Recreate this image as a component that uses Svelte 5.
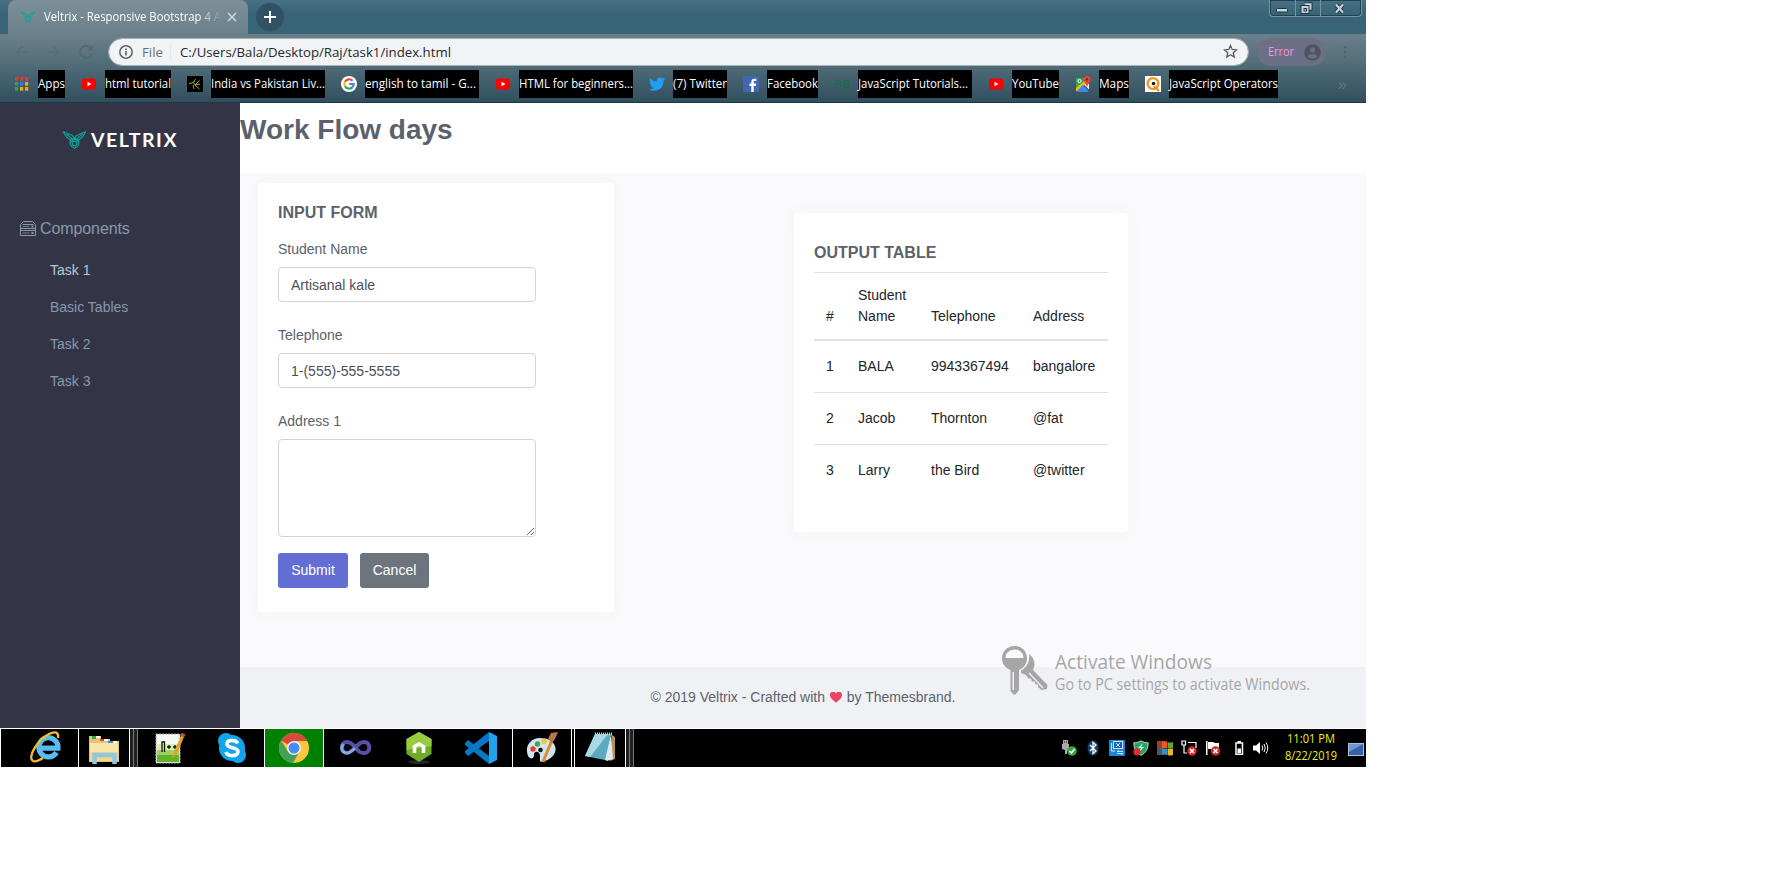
<script>
  const bookmarks = [
    { icon: 'apps', label: 'Apps', w: 27 },
    { icon: 'youtube', label: 'html tutorial', w: 66 },
    { icon: 'cricket', label: 'India vs Pakistan Liv...', w: 114 },
    { icon: 'google', label: 'english to tamil - G...', w: 114, tw: 111 },
    { icon: 'youtube', label: 'HTML for beginners...', w: 114 },
    { icon: 'twitter', label: '(7) Twitter', w: 54 },
    { icon: 'facebook', label: 'Facebook', w: 51 },
    { icon: 'geeks', label: 'JavaScript Tutorials...', w: 114, tw: 110 },
    { icon: 'youtube', label: 'YouTube', w: 47 },
    { icon: 'maps', label: 'Maps', w: 30 },
    { icon: 'query', label: 'JavaScript Operators', w: 109 }
  ];
  const links = ['Task 1', 'Basic Tables', 'Task 2', 'Task 3'];
  const rows = [
    ['1', 'BALA', '9943367494', 'bangalore'],
    ['2', 'Jacob', 'Thornton', '@fat'],
    ['3', 'Larry', 'the Bird', '@twitter']
  ];
  const tray = ['usb', 'bluetooth', 'intel', 'shield', 'windows', 'network', 'flag', 'battery', 'speaker'];
</script>

{#snippet fit(text, w, size, h, base)}
  <svg class="fit" width={w} height={h}><text x="0" y={base} font-size={size} textLength={w} lengthAdjust="spacingAndGlyphs">{text}</text></svg>
{/snippet}

{#snippet bird(w, h)}
  <svg width={w} height={h} viewBox="0 0 24 18" fill="none" stroke="#0fa398" stroke-width="1.200" stroke-linejoin="round">
    <path d="M.8.8 10 4.500 12 7.500l2-3L23.200.8C21 5 19.500 7.500 16 9L12 7.500 8 9C4.500 7.500 3 5 .8.8z" />
    <path d="M4 3l6 5.200M20 3l-6 5.200" />
    <path d="M8 9c-1 3 0 6.500 4 8.300 4-1.800 5-5.300 4-8.300M12 7.500 8 11M12 7.500l4 3.500" /><circle cx="12" cy="12.500" r="2.300" />
  </svg>
{/snippet}

{#snippet favicon(name)}
  <svg width="16" height="16" viewBox="0 0 16 16">
    {#if name === 'apps'}
      {#each ['#e53935', '#e53935', '#e53935', '#34a05a', '#2b7de9', '#f5a700', '#34a05a', '#f5a700', '#f5a700'] as c, i}
        <rect x={1 + (i % 3) * 5} y={1 + Math.floor(i / 3) * 5} width="3.200" height="3.700" fill={c} />
      {/each}
    {:else if name === 'youtube'}
      <rect x="1" y="2.500" width="14" height="11" rx="2.500" fill="#f00" /><path d="m6.500 5.700 4 2.300-4 2.300z" fill="#fff" />
    {:else if name === 'cricket'}
      <path fill="#000" d="M0 0h16v16H0z" /><path d="M2 7.500 6.500 6.500 8 9 12.500 4.500M8 9l5-1M6.500 6.500 8.500 3M6 9l1 4M8 9l4.500 4" stroke="#a3ad2e" fill="none" />
    {:else if name === 'google'}
      <circle cx="8" cy="8" r="8" fill="#fff" />
      <g fill="none" stroke-width="2.200"><path d="M11.500 4.700A4.700 4.700 0 0 0 4 5.700" stroke="#ea4335" /><path d="M4 5.600a4.700 4.700 0 0 0 0 4.700" stroke="#fbbc05" /><path d="M4 10.200a4.700 4.700 0 0 0 7.300 1.200" stroke="#34a853" /><path d="M11.200 11.400A4.500 4.500 0 0 0 12.700 8H8.200" stroke="#4285f4" /></g>
    {:else if name === 'twitter'}
      <path fill="#1da1f2" d="M16 3.100c-.6.3-1.200.4-1.900.5.700-.4 1.200-1 1.400-1.800-.6.400-1.300.6-2.100.8a3.300 3.300 0 0 0-5.600 3C5.100 5.500 2.700 4.200 1.100 2.300c-.9 1.500-.4 3.400 1 4.400-.5 0-1-.2-1.500-.4 0 1.600 1.100 2.900 2.600 3.200-.5.100-1 .2-1.500.1.400 1.300 1.600 2.200 3.100 2.300A6.600 6.600 0 0 1 0 13.200c6.200 3.800 14.700.3 14.400-8.400.6-.5 1.200-1 1.600-1.700z" />
    {:else if name === 'facebook'}
      <path fill="#4267b2" d="M0 0h16v16H0z" /><path fill="#fff" d="M8.300 16v-6H6.500V7.600h1.800V5.900C8.300 3.800 9.500 2.700 11.400 2.700l1.900.1V5h-1.400c-1 0-1.200.5-1.200 1.200v1.400h2.500L12.800 10h-2.100v6z" />
    {:else if name === 'geeks'}
      <path d="M1.500 5.500C3 3.500 6.500 4 6.500 8S3 12.500 1.200 9.500M.5 8h6M14.500 5.500C13 3.500 9.500 4 9.500 8s3.500 4.500 5.300 1.500V8H9.500" fill="none" stroke="#1e6b50" stroke-width="1.500" />
    {:else if name === 'maps'}
      <path fill="#34a853" d="M1 2h9v6L1 15z" /><path fill="#fbbc05" d="M1 12 12 3l2 2L2 15H1z" /><path fill="#4285f4" d="m7.500 9 6 6-1 1H1.500z" /><path fill="#e8eaed" d="m9 8.500 5 5V8l-2-1z" /><circle cx="4.500" cy="5" r="1.600" fill="none" stroke="#fff" /><path fill="#ea4335" d="M12 0a3.500 3.500 0 0 1 3.500 3.500C15.500 6 13 7 12 11c-1-4-3.500-5-3.500-7.500A3.500 3.500 0 0 1 12 0z" /><circle cx="12" cy="3.500" r="1.200" fill="#8c1d18" />
    {:else}
      <path fill="#fff" d="M0 0h16v16H0z" /><circle cx="8" cy="7.500" r="5.400" fill="none" stroke="#f7941e" stroke-width="2.300" /><path d="m9 10 5 5" stroke="#f7941e" stroke-width="2.300" /><circle cx="8.500" cy="7.500" r="1.700" fill="#111" />
    {/if}
  </svg>
{/snippet}

{#snippet trayIcon(name)}
  <svg class={name} width="16" height="16" viewBox="0 0 16 16">
    {#if name === 'usb'}
      <path fill="#aaa" d="M2 0h5v4h1v5l-2 2v3H4v-4L1 9V4h1z" /><path fill="#555" d="M3 1h1v2H3zM5 1h1v2H5z" /><circle cx="11" cy="11" r="4.800" fill="#3aa33a" /><path d="m8.500 11 2 2 3-4" stroke="#fff" stroke-width="1.500" fill="none" />
    {:else if name === 'bluetooth'}
      <ellipse cx="8" cy="8" rx="5.500" ry="7.500" fill="#14406f" /><path d="m5 5 6 6-3 2.500v-11L11 5l-6 6" fill="none" stroke="#fff" stroke-width="1.300" />
    {:else if name === 'intel'}
      <rect width="16" height="16" rx="1" fill="#1b86d8" /><rect x="4.500" y="1.500" width="9" height="7" fill="#1464ad" stroke="#cfe6f8" /><path d="m7 3 4 4m0-4L7 7M2.500 3v8H6M8 11.500h6M8 13.500h6M8 11.500l2-1M14 13.500l-2 1" stroke="#cfe6f8" fill="none" />
    {:else if name === 'shield'}
      <path d="M8 .8c2.500 1.400 4.500 2 7.200 2-.2 6-2 10-7.200 12.500C3 13 1 9 .8 2.800 3.500 2.800 5.500 2.200 8 .8z" fill="#23a566" stroke="#bcd8c8" /><path fill="#fff" d="M10 3 5 8h3l-2 4 5-5H8z" /><circle cx="4" cy="12" r="3.600" fill="#e52b2b" />
    {:else if name === 'windows'}
      <path fill="#9d3f2b" d="M0 1h6v6H0z" /><path fill="#555" d="M0 7h6v8H0z" /><path fill="#e95a24" d="M5 1.500c2-1 3.500-.5 5 0V8H5z" /><path fill="#69a52d" d="M10.500 2c2 .8 3.500.8 5.500 0v6c-2 1-3.500 1-5.500 0z" /><path fill="#3a8dcc" d="M5 8.500h5V15c-2-.8-3-.8-5 0z" /><path fill="#eeb422" d="M10.500 8.500c2 .8 3.500.8 5.500 0V15c-2 1-4 .5-5.500 0z" />
    {:else if name === 'network'}
      <path d="M1 1h3.500v4H1zM3 5v8h3M7 2.500h8V8" stroke="#fff" fill="none" stroke-width="1.200" /><circle cx="11" cy="11" r="4.700" fill="#d92a2a" /><path d="m9 9 4 4m0-4-4 4" stroke="#fff" stroke-width="1.700" />
    {:else if name === 'flag'}
      <path fill="#fff" d="M1 1h1.500v14H1zM3 2h5l2 1h4v6H3z" /><circle cx="10.500" cy="11" r="4.700" fill="#d92a2a" /><path d="m8.500 9 4 4m0-4-4 4" stroke="#fff" stroke-width="1.700" />
    {:else if name === 'battery'}
      <path d="M5 3h6.500v11.300H5z" fill="none" stroke="#fff" stroke-width="1.500" /><path fill="#fff" d="M6.500 1h3.500v2H6.500zM6.500 8.500H10v4.500H6.500z" />
    {:else}
      <path fill="#fff" d="M0 5.500h3L7 2v12l-4-3.500H0z" /><path d="M9 5.500q1.500 2.500 0 5M11 4q2.600 4 0 8M13 2.500q3.600 5.500 0 11" fill="none" stroke="#fff" />
    {/if}
  </svg>
{/snippet}

<div class="screen">
  <header class="browser">
    <div class="tabstrip">
      <div class="tab">
        {@render bird(16, 12)}
        <span class="tabtitle">{@render fit('Veltrix - Responsive Bootstrap 4 A', 177, 12, 18, 13)}</span>
        <svg width="10" height="10" viewBox="0 0 10 10"><path d="m1 1 8 8m0-8-8 8" stroke="#ced6da" stroke-width="1.600" /></svg>
      </div>
      <div class="newtab"><svg width="12" height="12"><path d="M6 0v12M0 6h12" stroke="#fff" stroke-width="2" /></svg></div>
      <div class="winbtns">
        <span><svg width="12" height="6"><rect x=".5" y="1.500" width="11" height="3.500" rx="1" fill="#c8d4da" stroke="#1c3440" /></svg></span>
        <span><svg width="13" height="13"><path d="M4 .7h8v7.500H9" fill="#c8d4da" stroke="#1c3440" /><rect x="1" y="3.500" width="8" height="8" fill="#c8d4da" stroke="#1c3440" /><rect x="4" y="6.500" width="2.500" height="2.500" fill="#c8d4da" stroke="#1c3440" /></svg></span>
        <span><svg width="13" height="11"><path d="m3 1.500 7 8m0-8-7 8" stroke="#1c3440" stroke-width="4" /><path d="m3 1.500 7 8m0-8-7 8" stroke="#c8d4da" stroke-width="2.200" /></svg></span>
      </div>
    </div>
    <div class="toolbar">
      <svg class="nav" width="82" height="16" viewBox="0 0 82 16" fill="none" stroke="#5a6d77" stroke-width="1.600">
        <path d="M14 8H2m6-6L2 8l6 6M32 8h12m-6-6 6 6-6 6" /><path d="M76 4.200A6 6 0 1 0 77 9.500" stroke="#596870" stroke-width="2" /><path d="M77.500 1v5.500H72z" fill="#596870" stroke="none" />
      </svg>
      <div class="omnibox">
        <svg width="14" height="14" viewBox="0 0 14 14"><circle cx="7" cy="7" r="6.200" fill="none" stroke="#5f6368" stroke-width="1.500" /><path d="M6.200 6h1.600v4.500H6.200zM6.200 3.400h1.600v1.600H6.200z" fill="#5f6368" /></svg>
        <span class="scheme">{@render fit('File', 21, 13, 20, 15)}</span>
        <i></i>
        <span class="url">{@render fit('C:/Users/Bala/Desktop/Raj/task1/index.html', 271, 13.5, 20, 15)}</span>
        <svg class="star" width="15" height="15" viewBox="0 0 15 15"><path d="m7.500 1.500 1.700 4 4.300.4-3.300 2.800 1 4.300-3.700-2.300L3.800 13l1-4.300L1.500 5.900l4.300-.4z" fill="none" stroke="#5a5e63" stroke-width="1.300" /></svg>
      </div>
      <div class="profile">
        {@render fit('Error', 26, 12, 18, 13)}
        <svg width="17" height="17" viewBox="0 0 17 17"><circle cx="8.500" cy="8.500" r="8.300" fill="#50545c" /><circle cx="8.500" cy="6" r="2.600" fill="#6c7086" /><path d="M3.500 12.300c2-3 8-3 10 0-2 3-8 3-10 0z" fill="#6c7086" /></svg>
      </div>
      <svg class="dots" width="4" height="14" fill="#50616a"><circle cx="2" cy="2" r="1.300" /><circle cx="2" cy="7" r="1.300" /><circle cx="2" cy="12" r="1.300" /></svg>
    </div>
    <nav class="bookmarks">
      {#each bookmarks as b}
        <a href="#top">{@render favicon(b.icon)}<span style="width:{b.w}px">{@render fit(b.label, b.tw ?? b.w, 12, 28, 18)}</span></a>
      {/each}
      <b>»</b>
    </nav>
  </header>

  <div class="page">
    <aside>
      <div class="logo">{@render bird(25, 18)}<svg class="word" width="86" height="20"><text x="0" y="17" font-size="19.500" textLength="85.500" lengthAdjust="spacing">VELTRIX</text></svg></div>
      <div class="group">
        <svg width="16" height="15" viewBox="0 0 16 15" fill="none" stroke="#8699ad"><path d="M3.500.5h9l3 3v11H.5v-11zM.5 7.500h15M.5 9.500h15M2.500 3.500h11" /><path d="M2.500 5.500h7M2.500 12h7" stroke="#66778c" /><path fill="#8699ad" d="M11.500 11h2v2h-2zM11.500 4.500h2v2h-2z" stroke="none" /></svg>
        Components
      </div>
      <ul>{#each links as l, i}<li class:active={i === 0}>{l}</li>{/each}</ul>
    </aside>
    <main>
      <h1>Work Flow days</h1>
      <section class="content">
        <form class="card input" onsubmit={(e) => e.preventDefault()}>
          <h4>INPUT FORM</h4>
          <label for="name">Student Name</label>
          <input id="name" value="Artisanal kale" />
          <label for="tel">Telephone</label>
          <input id="tel" value="1-(555)-555-5555" />
          <label for="addr">Address 1</label>
          <textarea id="addr"></textarea>
          <div class="actions"><button class="primary">Submit</button><button type="button">Cancel</button></div>
        </form>
        <div class="card output">
          <h4>OUTPUT TABLE</h4>
          <div class="table">
            <div class="row head"><span>#</span><span>Student Name</span><span>Telephone</span><span>Address</span></div>
            {#each rows as r}
              <div class="row">{#each r as c}<span>{c}</span>{/each}</div>
            {/each}
          </div>
        </div>
      </section>
      <footer>© 2019 Veltrix - Crafted with <svg width="14" height="11" viewBox="-1 0 14 11"><path fill="#ec4561" d="M6 10.800C2 7.500 0 5.800 0 3.300A3.100 3.100 0 0 1 6 1.800a3.100 3.100 0 0 1 6 1.500c0 2.500-2 4.200-6 7.500z" /></svg> by Themesbrand.</footer>
    </main>
    <div class="watermark">
      <svg width="46" height="49" viewBox="0 0 46 49">
        <path fill="#a6a6a6" fill-rule="evenodd" d="M12.500 0C19.500 0 25 5 25 12.500c0 6-3.500 9.500-8 11.500v20l-3.500 4.500h-2L8.500 45V24C4 22 0 18.500 0 12.500 0 5 5.500 0 12.500 0zm0 3.500c-5 0-9 3.500-9 8.500h18c0-5-4-8.500-9-8.500zM10.500 26v18H12V26z" />
        <path fill="#a6a6a6" d="M27 8c4 3 6 7 5.500 11.500L31 24l14.500 15-.5 4-5.500 1-3.500-3v-2.500h-2.500l-1-3H30l-1-3h-2.500L24 29l-5-2v-2.500c6-3 9-9.500 8-16.500z" /><path d="m27 27 14 15" stroke="#f0f1f5" stroke-width="1.300" />
      </svg>
      <div class="notice">{@render fit('Activate Windows', 157, 20, 27, 21)}{@render fit('Go to PC settings to activate Windows.', 255, 15.5, 22, 15)}</div>
    </div>
  </div>

  <div class="taskbar">
    <div class="slot ie" style="width:65px">
      <svg width="32" height="32" viewBox="0 0 32 32"><path d="M26.500 21.500a9.600 9.600 0 1 1 1.500-4.300H11" fill="none" stroke="#56bdf0" stroke-width="5.200" /><path d="M3 30C-3 27 7 9 19 3c6-3 10-2 9 4M3 30c3 1 7-1 10-3" fill="none" stroke="#f3bd24" stroke-width="2.300" /></svg>
    </div>
    <div class="slot folder line" style="width:50px">
      <svg width="32" height="30" viewBox="0 0 32 30"><path fill="#e3c476" d="M1 5V2h12v3h9v2h9v21H1z" /><path fill="#f8e6a6" d="M2 9h28v18H2z" /><path fill="#efd88c" d="M2 18h28v9H2z" /><path fill="#2fa84f" d="M4 2h4v3H4z" /><path fill="#d9402d" d="M12 5h4v2h-4z" /><path fill="#2e8ee0" d="M20 7h5v2h-5z" /><path fill="#fff" d="M8 2h4v2H8zM16 5h4v2h-4zM25 7h4v2h-4z" /><path d="M6.500 30V21h20v9" fill="none" stroke="#8fc6e2" stroke-width="4.500" /></svg>
    </div>
    <div class="grip line"></div>
    <div class="slot npp" style="width:61px"><svg width="32" height="32" viewBox="0 0 32 32"><path fill="#f6f8f2" d="M3 2h24v29H3z" /><path fill="#d9efb0" d="M4 12h22v8H4z" /><path fill="#9dd35a" d="M4 18h22v6H4z" /><path fill="#62b32c" d="M4 23h22v7H4z" /><path d="M3 2h24v29H3z" fill="none" stroke="#aaa" stroke-dasharray="2 1" /><path d="M9 20V10h2.500v10M14 15h4m-2-2v4M20 15h4m-2-2v4" stroke="#111" stroke-width="1.300" fill="none" /><path d="m19 26 2-6L29 1l3 1.500L24 22z" fill="#e6a12c" /><path d="m29 1 3 1.500-1 3-3-1.500z" fill="#bf5142" /></svg></div>
    <div class="slot skype" style="width:64px"><svg width="32" height="32" viewBox="0 0 32 32"><circle cx="16" cy="16" r="13" fill="#12a5ec" /><circle cx="10" cy="9" r="8" fill="#12a5ec" /><circle cx="22" cy="23" r="8" fill="#12a5ec" /><path d="M21.500 11.500c-1-4-10.500-4-10.500.3 0 5.400 11 2.700 11 8 0 5-10.500 5-12 .2" fill="none" stroke="#fff" stroke-width="3.600" /></svg></div>
    <div class="slot chrome line" style="width:58px"><svg width="32" height="32" viewBox="0 0 32 32"><circle cx="16" cy="16" r="15" fill="#fbc63c" /><path fill="#d6493c" d="M16 16 3 8.500A15 15 0 0 1 29.300 9H16z" /><path fill="#479e57" d="M3 8.500A15 15 0 0 0 15 31l6.500-11.500-11.500 0z" /><circle cx="16" cy="16" r="7" fill="#f3f3f3" /><circle cx="16" cy="16" r="5.500" fill="#4a8af4" /></svg></div>
    <div class="slot line" style="width:63px"><svg width="32" height="18" viewBox="0 0 32 18"><path d="M16 9C12 4 9 3 6.500 3 .5 3 .5 14 7 14c6 0 10-11 17-11s7 10.500.5 11C21 14.500 18 12 16 9" fill="none" stroke="#5550a9" stroke-width="4" /><path d="M3.500 5C0 9 2 14 7 14c3 0 5-2 8-5" fill="none" stroke="#83a9dc" stroke-width="3" /></svg></div>
    <div class="slot" style="width:63px"><svg width="28" height="32" viewBox="0 0 28 32"><ellipse cx="14" cy="30" rx="11" ry="2" fill="#252525" /><path fill="#6faa28" d="m14 0 12.500 7v15L14 30 1.500 22V7z" /><path fill="#98cc3f" d="m14 0 12.500 7v7L1.500 18V7z" /><path d="M9.500 21v-6.500L14 12l4.500 2.500V21" fill="none" stroke="#fff" stroke-width="3.600" /></svg></div>
    <div class="slot" style="width:62px"><svg width="32" height="32" viewBox="0 0 32 32"><path fill="#0877bd" d="m0 11 3-3 21 16v8L0 13z" /><path fill="#0877c6" d="m0 21 3 3L24 9V0L0 19z" /><path fill="#23a3ee" d="m24 0 8 4v24l-8 4z" /></svg></div>
    <div class="slot line" style="width:58px"><svg width="32" height="32" viewBox="0 0 32 32"><path fill="#cfe3f1" d="M14 6C5 6 0 13 1 20c1 8 7 8 7 3s6-4 6 1-1 7 5 5c9-3 12-10 10-15S22 6 14 6z" /><circle cx="7" cy="17" r="2.700" fill="#e0412e" /><circle cx="11.500" cy="12" r="2.700" fill="#45a549" /><circle cx="18" cy="9.500" r="2.700" fill="#f5c52d" /><circle cx="14.500" cy="18" r="2.300" fill="#111" /><path d="M26 8 17 30" stroke="#df8a2b" stroke-width="3" /><path d="m22 7 3-6 7-1-3 7-3 4z" fill="#b8794a" /></svg></div>
    <div class="gap line"></div>
    <div class="slot note line" style="width:50px"><svg width="32" height="30" viewBox="0 0 32 30"><path fill="#b49257" d="m28 3 3 2v22l-5 2z" /><path fill="#dfe8ec" d="m27 2 2 25-6 2-3-2z" /><path fill="#5aaac0" d="M11 2h16l-6 26-20-4z" /><path fill="#a9d8e2" d="M11 2h13L6 25l-5-1z" /><path d="M11 2h17" stroke="#ccc" stroke-width="3" stroke-dasharray="1 1" /></svg></div>
    <div class="grip line"></div>
    <div class="tray">
      {#each tray as t}{@render trayIcon(t)}{/each}
    </div>
    <div class="clock">{@render fit('11:01 PM', 48, 12.5, 16, 12)}{@render fit('8/22/2019', 52, 12.5, 16, 13)}</div>
    <svg class="desk" width="16" height="13"><rect x=".5" y=".5" width="15" height="12" fill="#3763a6" stroke="#aac0dc" /><path fill="#6f98d2" d="M1 1h14L1 9z" /></svg>
  </div>
</div>

<style>
  :global(body) { background: #fff; }
  * { box-sizing: border-box; }
  svg { flex: none; display: block; }
  .screen { width: 1366px; height: 767px; overflow: hidden; font: 14px/21px "Liberation Sans", Arial, sans-serif; color: #5b626b; }
  .fit { font-family: "Open Sans", "Noto Sans", sans-serif; fill: currentColor; overflow: visible; }

  .browser { height: 103px; border-bottom: 1px solid #1d3946; background: linear-gradient(#6b808b 34px, #506b78 66px, #304f5e 102px); }
  .tabstrip { height: 34px; display: flex; align-items: flex-start; background: linear-gradient(#487185, #386478 14px, #386478); }
  .tab { width: 240px; height: 34px; margin-left: 8px; padding: 0 11px 0 12px; display: flex; align-items: center; color: #fff; border-radius: 8px 8px 0 0; background: linear-gradient(#7d9099, #6b808b); }
  .tabtitle { width: 178px; margin: 0 auto 0 8px; -webkit-mask-image: linear-gradient(90deg, #000 86%, transparent); mask-image: linear-gradient(90deg, #000 86%, transparent); }
  .newtab { width: 28px; height: 28px; margin: 3px 0 0 8px; border-radius: 50%; background: #305264; display: flex; align-items: center; justify-content: center; }
  .winbtns { margin: 0 4px 0 auto; width: 93px; height: 17px; display: grid; grid-template-columns: 25px 25px 1fr; border: 1px solid #7694a2; border-top: 0; border-radius: 0 0 4px 4px; box-shadow: inset 0 0 0 1px #23404f; }
  .winbtns span { display: flex; align-items: center; justify-content: center; border-left: 1px solid #7694a2; padding-right: 3px; }
  .winbtns span:first-child { border: 0; padding: 4px 1px 0 0; }
  .toolbar { height: 36px; display: flex; align-items: center; }
  .nav { margin-left: 15px; }
  .omnibox { width: 1141px; height: 28px; margin: 0 0 1px 11px; padding: 0 11px 0 10px; display: flex; align-items: center; border: 1px solid #aab2b6; border-radius: 14px; background: #f1f3f4; background-clip: padding-box; }
  .scheme { color: #6b7075; margin-left: 9px; }
  .omnibox i { width: 1px; height: 16px; margin: 0 9px 0 7px; background: #e6e8ea; }
  .url { color: #25282c; }
  .star { margin-left: auto; margin-right: -1px; }
  .profile { width: 69px; height: 28px; margin-left: 8px; padding: 0 5px 0 11px; display: flex; align-items: center; justify-content: space-between; border-radius: 14px; background: #6c7086; color: #ff8fe0; }
  .dots { margin-left: 17px; }
  .bookmarks { height: 28px; display: flex; align-items: center; padding: 0 19px 0 14px; }
  .bookmarks a { display: flex; align-items: center; gap: 8px; margin-right: 16px; }
  .bookmarks span { height: 28px; background: #000; color: #fff; }
  .bookmarks b { margin-left: auto; font-size: 17px; font-weight: 400; color: #62727b; }

  .page { height: 625px; display: flex; position: relative; }
  aside { width: 240px; background: #333547; color: #8699ad; }
  .logo { display: flex; align-items: center; gap: 4px; margin: 27px 0 0 62px; height: 20px; }
  .word { font-family: Lato, sans-serif; font-weight: 700; fill: #fff; overflow: visible; }
  .group { display: flex; align-items: center; gap: 4px; margin: 67px 0 0 20px; height: 22px; font-size: 16px; letter-spacing: -.1px; }
  ul { list-style: none; margin: 13px 0 0; padding: 0 0 0 50px; }
  li { height: 37px; line-height: 37px; }
  .active { color: #b4c9de; }
  main { width: 1126px; display: flex; flex-direction: column; }
  h1 { height: 70px; margin: 0; font-size: 28px; line-height: 34px; padding-top: 10px; }
  .content { height: 494px; padding: 10px 18px; background: #fafafc; display: flex; align-items: flex-start; }
  .card { background: #fff; border-radius: 4px; padding: 0 20px; box-shadow: 0 0 20px rgba(80, 80, 140, .035); }
  .input { width: 356px; height: 429px; padding-top: 20px; }
  .output { width: 334px; height: 319px; margin: 30px 0 0 180px; padding-top: 30px; }
  h4 { margin: 0; font-size: 16px; line-height: 20px; }
  .input h4 { margin-bottom: 16px; }
  .output h4 { margin-bottom: 9px; }
  label { display: block; margin-bottom: 7px; }
  input, textarea { display: block; width: 258px; height: 35px; margin: 0 0 23px; padding: 1px 12px 0; font: inherit; color: #495057; background: #fff; border: 1px solid #ced4da; border-radius: 4px; }
  textarea { height: 98px; margin-bottom: 16px; }
  .actions { display: flex; gap: 12px; }
  button { width: 69px; height: 35px; padding: 0; border: 0; border-radius: 3px; background: #6c757d; color: #fff; font: inherit; }
  .primary { width: 70px; background: #626ed4; }
  .table { color: #212529; }
  .row { display: grid; grid-template-columns: 32px 73px 102px 87px; border-top: 1px solid #dee2e6; height: 52px; align-items: center; }
  .row span { padding: 0 12px; }
  .head { height: 69px; border-bottom: 2px solid #dee2e6; align-items: end; padding-bottom: 12px; }
  .head + .row { border-top: 0; height: 51px; }
  footer { height: 61px; background: #f0f1f5; display: flex; justify-content: center; align-items: center; white-space: pre; }
  .watermark { position: absolute; left: 1002px; top: 543px; display: flex; gap: 7px; color: #a6a6a6; }
  .notice { padding-top: 2px; }

  .taskbar { height: 39px; display: flex; background: #000; border-top: 1px solid #fff; border-left: 1px solid #fff; }
  .slot { display: flex; align-items: center; justify-content: center; box-sizing: content-box; }
  .ie { padding: 0 0 2px 12px; }
  .folder { padding-top: 2px; }
  .note { padding-bottom: 2px; }
  .line { border-left: 1px solid #fff; }
  .chrome { background: #008000; border-right: 1px solid #fff; margin-right: -1px; }
  .npp { padding-right: 1px; }
  .gap { width: 3px; }
  .grip { width: 9px; background: linear-gradient(90deg, #202020 3px, #777 3px 4px, #202020 4px 7px, #777 7px); }
  .tray { margin-left: auto; display: flex; align-items: center; gap: 8px; }
  .battery { margin: 0 -2px 0 2px; }
  .clock { width: 52px; margin: 2px 11px 0 16px; color: #e9f01c; display: flex; flex-direction: column; align-items: center; }
  .desk { align-self: center; margin-right: 2px; margin-top: 3px; }
</style>
